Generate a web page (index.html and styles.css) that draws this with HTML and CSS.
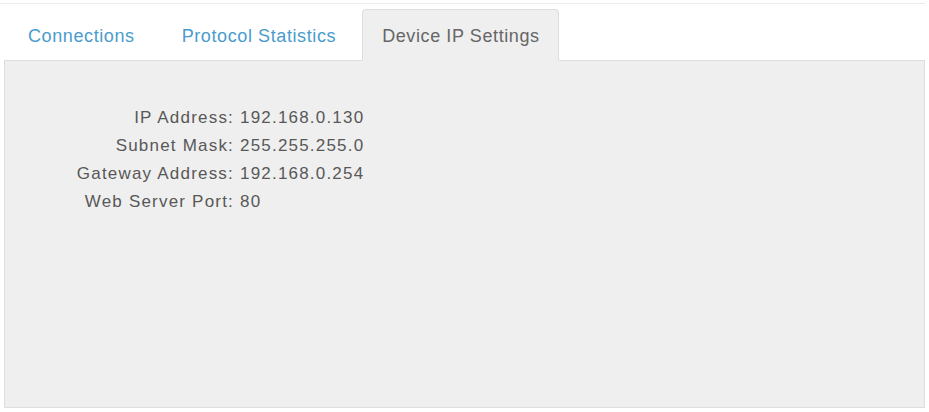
FILE: index.html
```html
<!DOCTYPE html>
<html lang="en">
<head>
<meta charset="utf-8">
<title>Device IP Settings</title>
<link rel="stylesheet" href="styles.css">
</head>
<body>
<div class="page">
  <div class="topline"></div>
  <ul class="tabs">
    <li class="tab"><a href="#">Connections</a></li>
    <li class="tab"><a href="#">Protocol Statistics</a></li>
    <li class="tab active"><a href="#">Device IP Settings</a></li>
  </ul>
  <div class="panel">
    <dl class="fields">
      <dt>IP Address:</dt><dd>192.168.0.130</dd>
      <dt>Subnet Mask:</dt><dd>255.255.255.0</dd>
      <dt>Gateway Address:</dt><dd>192.168.0.254</dd>
      <dt>Web Server Port:</dt><dd>80</dd>
    </dl>
  </div>
</div>
</body>
</html>
```
FILE: styles.css
```css
html, body {
  margin: 0;
  padding: 0;
  background: #ffffff;
}
.page {
  width: 921px;
  padding: 3px 4px 0 4px;
  font-family: "Liberation Sans", Arial, sans-serif;
}
.topline {
  margin-left: -4px;
  width: 925px;
  border-top: 1px solid #ececec;
  margin-bottom: 5px;
}
.tabs {
  list-style: none;
  margin: 0 0 -1px 3px;
  padding: 0;
  display: flex;
  position: relative;
  z-index: 1;
}
.tab {
  margin-right: 5px;
  border: 1px solid transparent;
  border-radius: 4px 4px 0 0;
}
.tab a {
  display: block;
  padding: 3px 20px 0 20px;
  line-height: 47px;
  font-size: 18px;
  letter-spacing: 0.6px;
  color: #4a9ccc;
  text-decoration: none;
}
.tab.active {
  background: #efefef;
  border-color: #dedede;
  border-bottom-color: #efefef;
}
.tab.active a {
  color: #666666;
  padding: 3px 18px 0 19px;
}
.panel {
  height: 346px;
  background: #efefef;
  border: 1px solid #dedede;
  box-sizing: content-box;
}
.fields {
  margin: 0;
  padding: 43px 0 0 65px;
  display: grid;
  grid-template-columns: 164px auto;
  column-gap: 6px;
  font-size: 17px;
  letter-spacing: 1.2px;
  line-height: 28px;
  color: #585858;
}
.fields dt {
  text-align: right;
  white-space: nowrap;
}
.fields dd {
  margin: 0;
}
```
